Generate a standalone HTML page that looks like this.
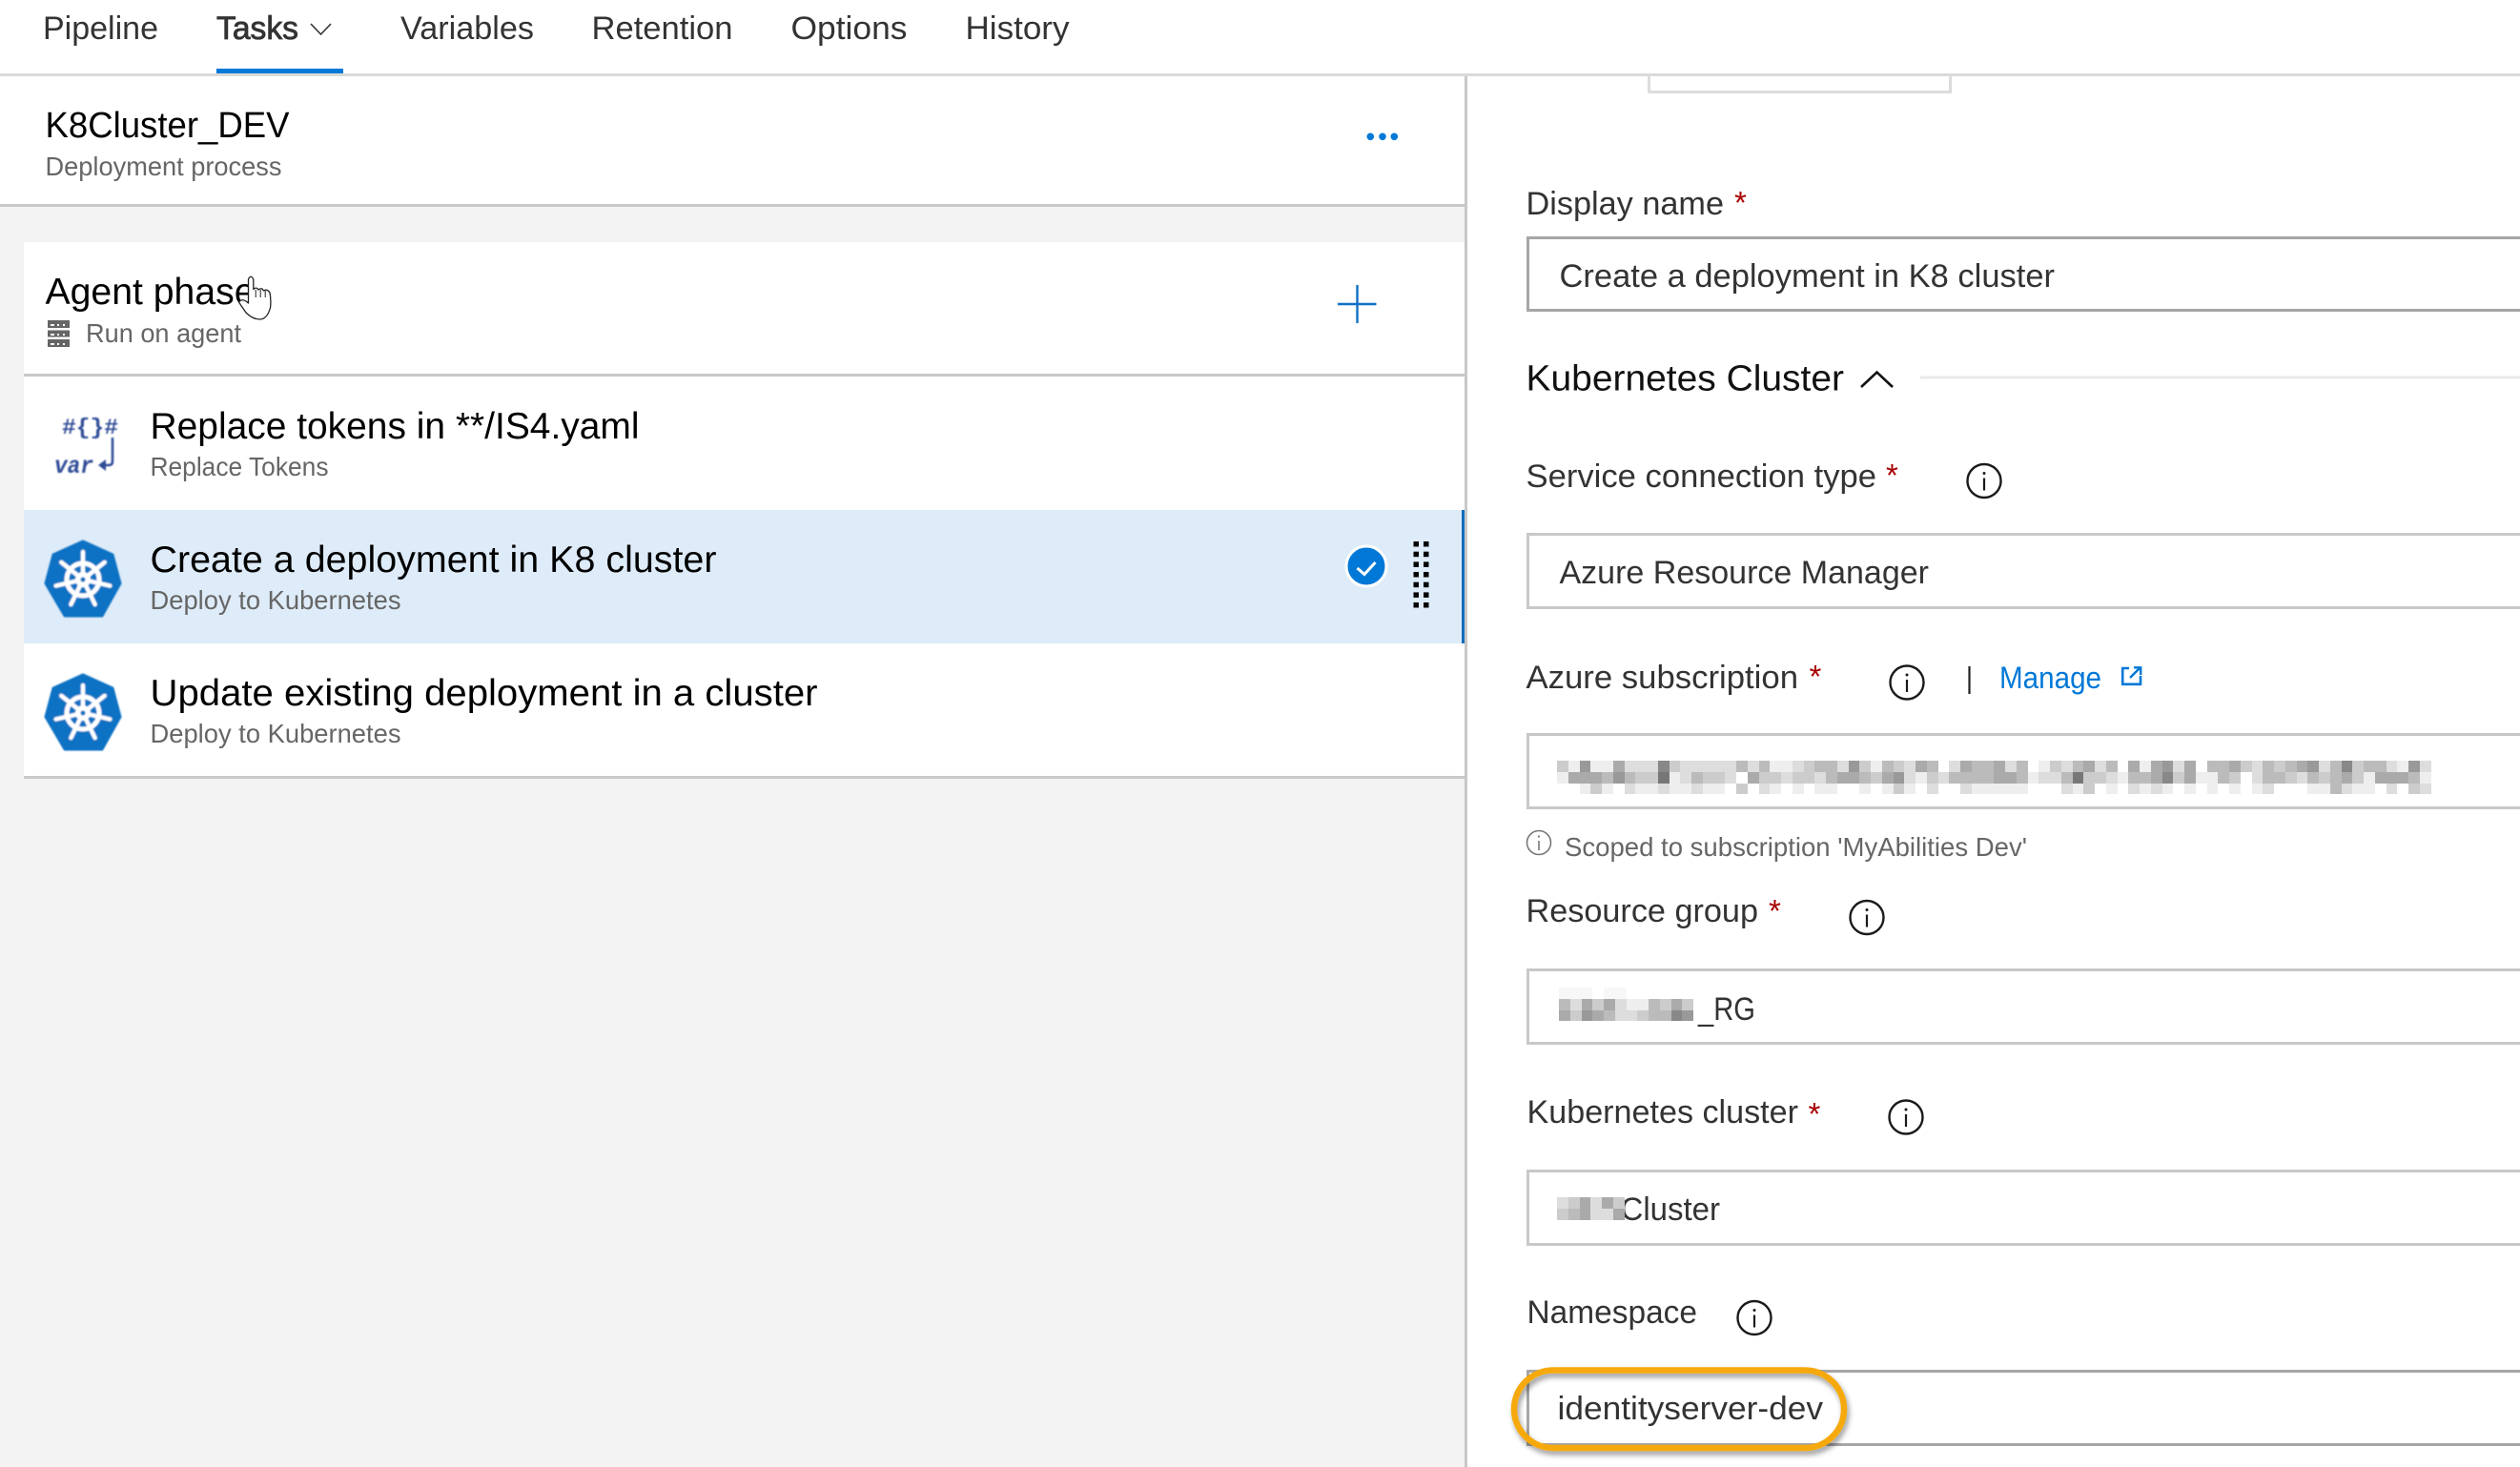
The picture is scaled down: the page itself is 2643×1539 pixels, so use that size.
<!DOCTYPE html>
<html lang="en">
<head>
<meta charset="utf-8">
<title>K8Cluster_DEV</title>
<style>
html,body{margin:0;padding:0;width:2643px;height:1539px;overflow:hidden;background:#fff}
svg{position:absolute;left:0;top:0}
text{font-family:"Liberation Sans",sans-serif}
.g{position:absolute;display:grid;grid-template-columns:repeat(auto-fill,11.75px);grid-auto-rows:11.75px}
.g i{display:block}
.s{background:#777}.t{background:#888}.u{background:#999}.a{background:#aaa}.b{background:#bbb}.c{background:#ccc}.d{background:#ddd}.e{background:#eee}.f{background:#fff}.h{background:#f7f7f7}
</style>
</head>
<body>
<svg width="2643" height="1539" viewBox="0 0 2643 1539" xmlns="http://www.w3.org/2000/svg">
<defs>
<filter id="soft" x="-10%" y="-10%" width="120%" height="120%"><feGaussianBlur stdDeviation="0.7"/></filter>
<filter id="sh" x="-5%" y="-15%" width="110%" height="130%"><feDropShadow dx="2" dy="4" stdDeviation="3" flood-color="#000" flood-opacity="0.4"/></filter>
<g id="k8">
<path d="M87 568 L118 582 L126 612 L107 646 L68 646 L48 612 L56 582 Z" fill="#0b72c4" stroke="#0b72c4" stroke-width="3" stroke-linejoin="round"/>
<g stroke="#fff" fill="none" stroke-linecap="round">
<circle cx="87" cy="608" r="17" stroke-width="5"/>
<path d="M87 608V579M87 608L109.7 589.9M87 608L115.3 614.5M87 608L99.6 634.1M87 608L74.4 634.1M87 608L58.7 614.5M87 608L64.3 589.9" stroke-width="4.4"/>
</g>
<circle cx="87" cy="608" r="8" fill="#fff"/>
<circle cx="87" cy="608" r="2.6" fill="#0b72c4"/>
</g>
<g id="inf" fill="none">
<circle cx="0" cy="0" r="17.5" stroke="#1a1a1a" stroke-width="2.4"/>
<path d="M0 -3V10" stroke="#1a1a1a" stroke-width="2.2"/>
<circle cx="0" cy="-8" r="1.5" fill="#1a1a1a"/>
</g>
</defs>

<!-- left backgrounds -->
<rect x="0" y="217" width="1536" height="1322" fill="#f3f3f3"/>
<rect x="25" y="254" width="1511" height="563" fill="#fff"/>
<rect x="25" y="535" width="1511" height="140" fill="#deebf8"/>
<rect x="1533" y="535" width="3" height="140" fill="#106ebe"/>
<rect x="0" y="214" width="1536" height="3" fill="#c8c8c8"/>
<rect x="25" y="392" width="1511" height="3" fill="#c8c8c8"/>
<rect x="25" y="814" width="1511" height="3" fill="#c8c8c8"/>
<rect x="1536" y="80" width="3" height="1459" fill="#c8c8c8"/>
<rect x="0" y="77" width="2643" height="3" fill="#dadada"/>

<!-- nav -->
<g font-size="34" fill="#333">
<text x="45" y="41" textLength="121" lengthAdjust="spacingAndGlyphs">Pipeline</text>
<text x="227" y="41" textLength="86" lengthAdjust="spacingAndGlyphs" stroke="#333" stroke-width="0.8">Tasks</text>
<text x="420" y="41" textLength="140" lengthAdjust="spacingAndGlyphs">Variables</text>
<text x="620.5" y="41" textLength="148" lengthAdjust="spacingAndGlyphs">Retention</text>
<text x="829.5" y="41" textLength="122" lengthAdjust="spacingAndGlyphs">Options</text>
<text x="1012.5" y="41" textLength="109" lengthAdjust="spacingAndGlyphs">History</text>
</g>
<path d="M326 25L336.5 36L347 25" fill="none" stroke="#333" stroke-width="1.6"/>
<rect x="227" y="72" width="133" height="5" fill="#0078d7"/>

<!-- process header -->
<text x="47.5" y="144" font-size="38" fill="#000" textLength="256" lengthAdjust="spacingAndGlyphs">K8Cluster_DEV</text>
<text x="47.5" y="184" font-size="28" fill="#666" textLength="248" lengthAdjust="spacingAndGlyphs">Deployment process</text>
<g fill="#0078d7"><circle cx="1437.3" cy="143.3" r="3.8"/><circle cx="1450" cy="143.3" r="3.8"/><circle cx="1462.3" cy="143.3" r="3.8"/></g>

<!-- agent phase -->
<text x="47.5" y="319" font-size="39" fill="#000" textLength="220" lengthAdjust="spacingAndGlyphs">Agent phase</text>
<g fill="#666">
<rect x="50" y="336" width="23" height="8"/><rect x="50" y="346.5" width="23" height="7"/><rect x="50" y="356" width="23" height="8"/>
</g>
<g fill="#fff">
<rect x="53" y="340" width="4" height="2"/><rect x="60" y="340" width="2" height="2"/><rect x="66" y="340" width="2" height="2"/>
<rect x="53" y="350" width="4" height="2"/><rect x="60" y="350" width="2" height="2"/><rect x="66" y="350" width="2" height="2"/>
<rect x="53" y="360" width="4" height="2"/><rect x="60" y="360" width="2" height="2"/><rect x="66" y="360" width="2" height="2"/>
</g>
<text x="90" y="359" font-size="28" fill="#666" textLength="163" lengthAdjust="spacingAndGlyphs">Run on agent</text>
<path d="M1403 319H1443.5M1423.5 299V339" stroke="#0f6fc6" stroke-width="2.4" fill="none"/>

<!-- hand cursor -->
<path d="M260.5 318 L260.5 293 Q263 287.5 265.8 293 L265.8 303.5 Q269 300.5 271 304 Q274.5 301 276.5 305 Q280 302.5 283 307 Q284.5 315 283.5 323 Q280 335 272.5 335 Q265 335 258 328 L250.5 317 Q254 312 260.5 318 Z" fill="#fff" stroke="#222" stroke-width="1.3" stroke-linejoin="round"/>
<path d="M268.2 304V312M273.2 304V312M278.2 305V312" stroke="#222" stroke-width="1" fill="none"/>

<!-- task rows -->
<g font-size="39" fill="#000">
<text x="157.5" y="460" textLength="513" lengthAdjust="spacingAndGlyphs">Replace tokens in **/IS4.yaml</text>
<text x="157.5" y="600" textLength="594" lengthAdjust="spacingAndGlyphs">Create a deployment in K8 cluster</text>
<text x="157.5" y="740" textLength="700" lengthAdjust="spacingAndGlyphs">Update existing deployment in a cluster</text>
</g>
<g font-size="28" fill="#666">
<text x="157.5" y="499" textLength="187" lengthAdjust="spacingAndGlyphs">Replace Tokens</text>
<text x="157.5" y="639" textLength="263" lengthAdjust="spacingAndGlyphs">Deploy to Kubernetes</text>
<text x="157.5" y="779" textLength="263" lengthAdjust="spacingAndGlyphs">Deploy to Kubernetes</text>
</g>

<!-- replace tokens icon -->
<g filter="url(#soft)" fill="#2f4b96">
<text x="65" y="455" font-size="23" font-weight="700" style="font-family:'Liberation Mono',monospace" textLength="59" lengthAdjust="spacingAndGlyphs">#{}#</text>
<text x="57" y="496" font-size="25" font-weight="700" font-style="italic" style="font-family:'Liberation Mono',monospace" textLength="41" lengthAdjust="spacingAndGlyphs">var</text>
<path d="M118 459V484Q118 488 114 488H106" fill="none" stroke="#2f4b96" stroke-width="2.5"/>
<path d="M103 488L111 482V494Z"/>
</g>

<!-- k8s icons -->
<use href="#k8" filter="url(#soft)"/>
<use href="#k8" y="140" filter="url(#soft)"/>

<!-- check + grip -->
<circle cx="1433" cy="594" r="21" fill="#0078d7" stroke="#fff" stroke-width="3"/>
<path d="M1423.5 596L1431 602.5L1442.5 590" fill="none" stroke="#fff" stroke-width="3"/>
<g fill="#000">
<rect x="1482.5" y="568" width="5.5" height="5.5"/><rect x="1493" y="568" width="5.5" height="5.5"/>
<rect x="1482.5" y="578.7" width="5.5" height="5.5"/><rect x="1493" y="578.7" width="5.5" height="5.5"/>
<rect x="1482.5" y="589.4" width="5.5" height="5.5"/><rect x="1493" y="589.4" width="5.5" height="5.5"/>
<rect x="1482.5" y="600" width="5.5" height="5.5"/><rect x="1493" y="600" width="5.5" height="5.5"/>
<rect x="1482.5" y="610.7" width="5.5" height="5.5"/><rect x="1493" y="610.7" width="5.5" height="5.5"/>
<rect x="1482.5" y="621.4" width="5.5" height="5.5"/><rect x="1493" y="621.4" width="5.5" height="5.5"/>
<rect x="1482.5" y="632" width="5.5" height="5.5"/><rect x="1493" y="632" width="5.5" height="5.5"/>
</g>

<!-- right panel -->
<path d="M1729.5 80V96.5H2045.5V80" fill="none" stroke="#dcdcdc" stroke-width="3"/>

<g font-size="34" fill="#333">
<text x="1600.5" y="225" textLength="207.5" lengthAdjust="spacingAndGlyphs">Display name</text>
<text x="1635.5" y="301" textLength="519.5" lengthAdjust="spacingAndGlyphs">Create a deployment in K8 cluster</text>
<text x="1600.5" y="511" textLength="367.5" lengthAdjust="spacingAndGlyphs">Service connection type</text>
<text x="1635.5" y="612" textLength="387.5" lengthAdjust="spacingAndGlyphs">Azure Resource Manager</text>
<text x="1600.5" y="722" textLength="285.5" lengthAdjust="spacingAndGlyphs">Azure subscription</text>
<text x="1600.5" y="967" textLength="243.5" lengthAdjust="spacingAndGlyphs">Resource group</text>
<text x="1781" y="1070" textLength="60" lengthAdjust="spacingAndGlyphs">_RG</text>
<text x="1601.5" y="1178" textLength="284.5" lengthAdjust="spacingAndGlyphs">Kubernetes cluster</text>
<text x="1699.5" y="1280" textLength="104.5" lengthAdjust="spacingAndGlyphs">Cluster</text>
<text x="1601.5" y="1388" textLength="178.5" lengthAdjust="spacingAndGlyphs">Namespace</text>
<text x="1633.5" y="1489" textLength="278.5" lengthAdjust="spacingAndGlyphs">identityserver-dev</text>
</g>
<text x="1600.5" y="409.5" font-size="38" fill="#111" textLength="333.5" lengthAdjust="spacingAndGlyphs">Kubernetes Cluster</text>
<path d="M1952 406L1968.5 390.5L1985 406" fill="none" stroke="#111" stroke-width="2.6"/>
<rect x="2014" y="394.5" width="629" height="3" fill="#eaeaea"/>

<g font-size="33" fill="#a80000">
<text x="1819" y="224">*</text>
<text x="1978" y="510">*</text>
<text x="1897.5" y="721">*</text>
<text x="1855" y="967">*</text>
<text x="1896.5" y="1180">*</text>
</g>

<g fill="none" stroke="#c8c8c8" stroke-width="3">
<rect x="1602.5" y="249.5" width="1100" height="76" stroke="#a6a6a6"/>
<rect x="1602.5" y="560.5" width="1100" height="77"/>
<rect x="1602.5" y="770.5" width="1100" height="77"/>
<rect x="1602.5" y="1017.5" width="1100" height="77"/>
<rect x="1602.5" y="1228.5" width="1100" height="77"/>
<rect x="1602.5" y="1438.5" width="1100" height="77" stroke="#a6a6a6"/>
</g>

<use href="#inf" x="2081" y="504.5"/>
<use href="#inf" x="2000" y="716"/>
<use href="#inf" x="1958" y="962.5"/>
<use href="#inf" x="1999" y="1172"/>
<use href="#inf" x="1840" y="1382.5"/>

<path d="M2065.5 699V728" stroke="#222" stroke-width="2.2"/>
<text x="2097" y="722" font-size="32" fill="#0078d7" textLength="107" lengthAdjust="spacingAndGlyphs">Manage</text>
<path d="M2233 701H2226.2V717.8H2245V709" fill="none" stroke="#0078d7" stroke-width="2.6"/>
<path d="M2234 711L2244 701M2238 700.3H2245.2V708" fill="none" stroke="#0078d7" stroke-width="2.4"/>

<circle cx="1614" cy="884" r="12.5" fill="none" stroke="#777" stroke-width="1.6"/>
<path d="M1614 882V892" stroke="#777" stroke-width="1.6"/>
<circle cx="1614" cy="877.5" r="1.1" fill="#777"/>
<text x="1641" y="898" font-size="28" fill="#666" textLength="485" lengthAdjust="spacingAndGlyphs">Scoped to subscription 'MyAbilities Dev'</text>

<rect x="1588" y="1437.5" width="346" height="81.5" rx="41" fill="none" stroke="#f6a90d" stroke-width="6.5" filter="url(#sh)"/>
</svg>

<div class="g" style="left:1633px;top:798px;width:916.5px"><i class="c"></i><i class="e"></i><i class="u"></i><i class="e"></i><i class="e"></i><i class="a"></i><i class="d"></i><i class="d"></i><i class="d"></i><i class="t"></i><i class="c"></i><i class="d"></i><i class="d"></i><i class="d"></i><i class="d"></i><i class="d"></i><i class="b"></i><i class="d"></i><i class="b"></i><i class="e"></i><i class="e"></i><i class="d"></i><i class="c"></i><i class="b"></i><i class="b"></i><i class="d"></i><i class="u"></i><i class="c"></i><i class="e"></i><i class="b"></i><i class="c"></i><i class="d"></i><i class="a"></i><i class="b"></i><i class="f"></i><i class="d"></i><i class="a"></i><i class="b"></i><i class="b"></i><i class="a"></i><i class="d"></i><i class="b"></i><i class="f"></i><i class="e"></i><i class="c"></i><i class="d"></i><i class="b"></i><i class="a"></i><i class="d"></i><i class="b"></i><i class="f"></i><i class="a"></i><i class="e"></i><i class="a"></i><i class="u"></i><i class="d"></i><i class="a"></i><i class="f"></i><i class="b"></i><i class="b"></i><i class="a"></i><i class="c"></i><i class="d"></i><i class="b"></i><i class="c"></i><i class="b"></i><i class="a"></i><i class="u"></i><i class="d"></i><i class="b"></i><i class="t"></i><i class="c"></i><i class="b"></i><i class="b"></i><i class="d"></i><i class="e"></i><i class="u"></i><i class="d"></i>
<i class="e"></i><i class="a"></i><i class="a"></i><i class="a"></i><i class="b"></i><i class="u"></i><i class="b"></i><i class="c"></i><i class="c"></i><i class="s"></i><i class="e"></i><i class="d"></i><i class="b"></i><i class="c"></i><i class="c"></i><i class="d"></i><i class="f"></i><i class="a"></i><i class="c"></i><i class="c"></i><i class="d"></i><i class="c"></i><i class="c"></i><i class="d"></i><i class="b"></i><i class="a"></i><i class="a"></i><i class="b"></i><i class="c"></i><i class="a"></i><i class="u"></i><i class="d"></i><i class="e"></i><i class="c"></i><i class="d"></i><i class="b"></i><i class="b"></i><i class="b"></i><i class="b"></i><i class="a"></i><i class="a"></i><i class="b"></i><i class="e"></i><i class="d"></i><i class="d"></i><i class="b"></i><i class="s"></i><i class="c"></i><i class="c"></i><i class="d"></i><i class="e"></i><i class="b"></i><i class="b"></i><i class="a"></i><i class="t"></i><i class="c"></i><i class="a"></i><i class="e"></i><i class="e"></i><i class="b"></i><i class="c"></i><i class="f"></i><i class="d"></i><i class="b"></i><i class="b"></i><i class="c"></i><i class="d"></i><i class="b"></i><i class="c"></i><i class="b"></i><i class="a"></i><i class="c"></i><i class="e"></i><i class="a"></i><i class="a"></i><i class="a"></i><i class="b"></i><i class="e"></i>
<i class="f"></i><i class="f"></i><i class="e"></i><i class="c"></i><i class="e"></i><i class="f"></i><i class="d"></i><i class="e"></i><i class="e"></i><i class="d"></i><i class="e"></i><i class="e"></i><i class="d"></i><i class="e"></i><i class="e"></i><i class="f"></i><i class="c"></i><i class="f"></i><i class="d"></i><i class="e"></i><i class="f"></i><i class="e"></i><i class="f"></i><i class="e"></i><i class="e"></i><i class="f"></i><i class="f"></i><i class="e"></i><i class="f"></i><i class="e"></i><i class="c"></i><i class="e"></i><i class="f"></i><i class="d"></i><i class="f"></i><i class="f"></i><i class="d"></i><i class="e"></i><i class="e"></i><i class="e"></i><i class="e"></i><i class="e"></i><i class="f"></i><i class="f"></i><i class="f"></i><i class="d"></i><i class="e"></i><i class="c"></i><i class="f"></i><i class="e"></i><i class="f"></i><i class="d"></i><i class="e"></i><i class="d"></i><i class="e"></i><i class="f"></i><i class="e"></i><i class="f"></i><i class="e"></i><i class="f"></i><i class="e"></i><i class="f"></i><i class="e"></i><i class="d"></i><i class="f"></i><i class="f"></i><i class="f"></i><i class="e"></i><i class="e"></i><i class="b"></i><i class="d"></i><i class="e"></i><i class="e"></i><i class="f"></i><i class="d"></i><i class="f"></i><i class="c"></i><i class="d"></i></div>

<div class="g" style="left:1635px;top:1036px;width:141px"><i class="h"></i><i class="h"></i><i class="h"></i><i class="f"></i><i class="h"></i><i class="h"></i><i class="f"></i><i class="f"></i><i class="f"></i><i class="f"></i><i class="f"></i><i class="f"></i>
<i class="b"></i><i class="d"></i><i class="a"></i><i class="c"></i><i class="a"></i><i class="d"></i><i class="e"></i><i class="e"></i><i class="b"></i><i class="c"></i><i class="a"></i><i class="c"></i>
<i class="a"></i><i class="c"></i><i class="u"></i><i class="a"></i><i class="b"></i><i class="d"></i><i class="d"></i><i class="c"></i><i class="b"></i><i class="b"></i><i class="t"></i><i class="u"></i></div>

<div class="g" style="left:1633px;top:1256px;width:70.5px"><i class="d"></i><i class="c"></i><i class="a"></i><i class="d"></i><i class="a"></i><i class="c"></i>
<i class="c"></i><i class="b"></i><i class="a"></i><i class="d"></i><i class="d"></i><i class="a"></i></div>
</body>
</html>
